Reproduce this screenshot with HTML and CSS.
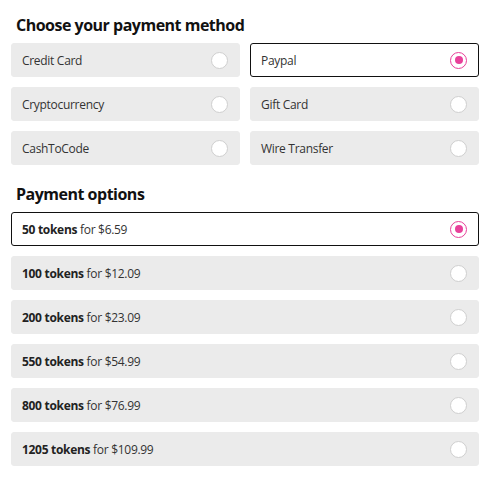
FILE: index.html
```html
<!DOCTYPE html>
<html>
<head>
<meta charset="utf-8">
<link rel="stylesheet" href="styles.css">
</head>
<body>
<div class="page">
  <h2 class="title">Choose your payment method</h2>
  <div class="methods">
    <div class="option"><span class="label">Credit Card</span><span class="radio"></span></div>
    <div class="option selected"><span class="label">Paypal</span><span class="radio"></span></div>
    <div class="option"><span class="label">Cryptocurrency</span><span class="radio"></span></div>
    <div class="option"><span class="label">Gift Card</span><span class="radio"></span></div>
    <div class="option"><span class="label">CashToCode</span><span class="radio"></span></div>
    <div class="option"><span class="label">Wire Transfer</span><span class="radio"></span></div>
  </div>
  <h2 class="title second">Payment options</h2>
  <div class="packages">
    <div class="option selected"><span class="label"><b>50 tokens</b> for $6.59</span><span class="radio"></span></div>
    <div class="option"><span class="label"><b>100 tokens</b> for $12.09</span><span class="radio"></span></div>
    <div class="option"><span class="label"><b>200 tokens</b> for $23.09</span><span class="radio"></span></div>
    <div class="option"><span class="label"><b>550 tokens</b> for $54.99</span><span class="radio"></span></div>
    <div class="option"><span class="label"><b>800 tokens</b> for $76.99</span><span class="radio"></span></div>
    <div class="option"><span class="label"><b>1205 tokens</b> for $109.99</span><span class="radio"></span></div>
  </div>
</div>
</body>
</html>
```

FILE: styles.css
```css
* { box-sizing: border-box; }
html, body { margin: 0; padding: 0; background: #fff; }
body {
  font-family: "Open Sans", "Noto Sans", sans-serif;
  color: #222;
}
.page {
  padding: 14px 12px 0 11px;
}
.title {
  margin: 0 0 7px 5px;
  font-size: 16px;
  line-height: 22px;
  font-weight: 700;
  color: #111;
  letter-spacing: -0.5px;
}
.title.second { margin-top: 18px; }
.methods {
  display: grid;
  grid-template-columns: 1fr 1fr;
  gap: 10px;
}
.packages {
  display: flex;
  flex-direction: column;
  gap: 10px;
}
.option {
  height: 34px;
  display: flex;
  align-items: center;
  justify-content: space-between;
  padding: 0 11px 0 10px;
  background: #ebebeb;
  border: 1px solid #ebebeb;
  border-radius: 3px;
}
.option.selected {
  background: #fff;
  border-color: #111;
}
.label {
  font-size: 12px;
  color: #333;
  letter-spacing: -0.3px;
}
.label b { font-weight: 700; color: #222; }
.radio {
  width: 17px;
  height: 17px;
  border-radius: 50%;
  background: #fff;
  border: 1px solid #cfcfcf;
  display: flex;
  align-items: center;
  justify-content: center;
}
.selected .radio {
  border: 1.5px solid #e8409a;
}
.selected .radio::after {
  content: "";
  width: 8px;
  height: 8px;
  border-radius: 50%;
  background: #e8409a;
}
```
